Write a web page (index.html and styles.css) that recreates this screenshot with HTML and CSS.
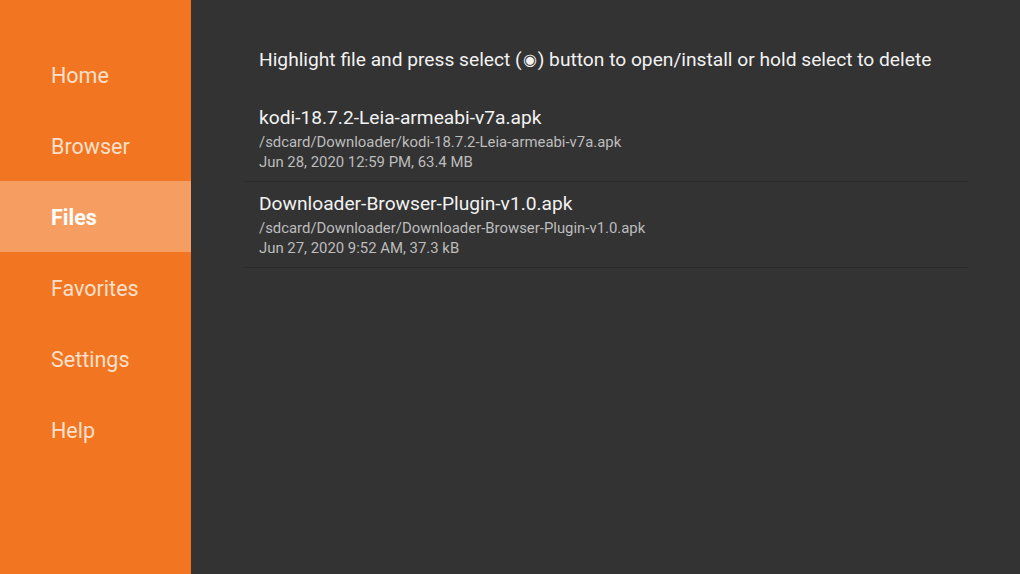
FILE: index.html
```html
<!DOCTYPE html>
<html lang="en">

<head>
<title>Downloader - Files</title>
<meta charset="UTF-8">
<meta name="viewport" content="width=device-width, initial-scale=1.0">
<link rel="stylesheet" href="styles.css">
</head>

<body>
<nav class="sidebar">
<div class="nav-item">Home</div>
<div class="nav-item">Browser</div>
<div class="nav-item selected">Files</div>
<div class="nav-item">Favorites</div>
<div class="nav-item">Settings</div>
<div class="nav-item">Help</div>
</nav>

<main class="content">
<p class="hint">Highlight file and press select (<span class="select-dot">&#9673;</span>) button to open/install or hold select to delete</p>
<ul class="file-list">
<li class="file">
<div class="file-name">kodi-18.7.2-Leia-armeabi-v7a.apk</div>
<div class="file-meta">/sdcard/Downloader/kodi-18.7.2-Leia-armeabi-v7a.apk</div>
<div class="file-meta">Jun 28, 2020 12:59 PM, 63.4 MB</div>
</li>
<li class="file">
<div class="file-name">Downloader-Browser-Plugin-v1.0.apk</div>
<div class="file-meta">/sdcard/Downloader/Downloader-Browser-Plugin-v1.0.apk</div>
<div class="file-meta">Jun 27, 2020 9:52 AM, 37.3 kB</div>
</li>
</ul>
</main>
</body>
</html>
```

FILE: styles.css
```css
html, body {
    height: 100%;
}
body {
    margin: 0;
    display: flex;
    background-color: #333333;
    font-family: Roboto, "Liberation Sans", sans-serif;
    overflow: hidden;
}
.sidebar {
    width: 191px;
    flex-shrink: 0;
    padding-top: 39px;
    background-color: #f27521;
}
.nav-item {
    height: 71px;
    display: flex;
    align-items: center;
    padding-left: 51px;
    padding-top: 2px;
    box-sizing: border-box;
    font-size: 21.5px;
    color: #fde0cb;
}
.nav-item.selected {
    background-color: #f69e62;
    color: #ffffff;
    font-weight: bold;
}
.content {
    flex: 1;
    padding: 0 51px 0 52px;
}
.hint {
    margin: 0;
    padding: 48px 0 24px 16px;
    font-size: 19.2px;
    line-height: 24px;
    color: #f2f2f2;
}
.select-dot {
    font-size: 16px;
    margin: 0 1px;
    vertical-align: 1px;
}
.file-list {
    list-style: none;
    margin: 0;
    padding: 0;
}
.file {
    padding: 8px 16px 9px 16px;
    border-bottom: 1px solid #2b2b2b;
}
.file-name {
    font-size: 19.2px;
    line-height: 28px;
    color: #f2f2f2;
}
.file-meta {
    font-size: 14.9px;
    line-height: 20px;
    color: #bdbdbd;
}
```
